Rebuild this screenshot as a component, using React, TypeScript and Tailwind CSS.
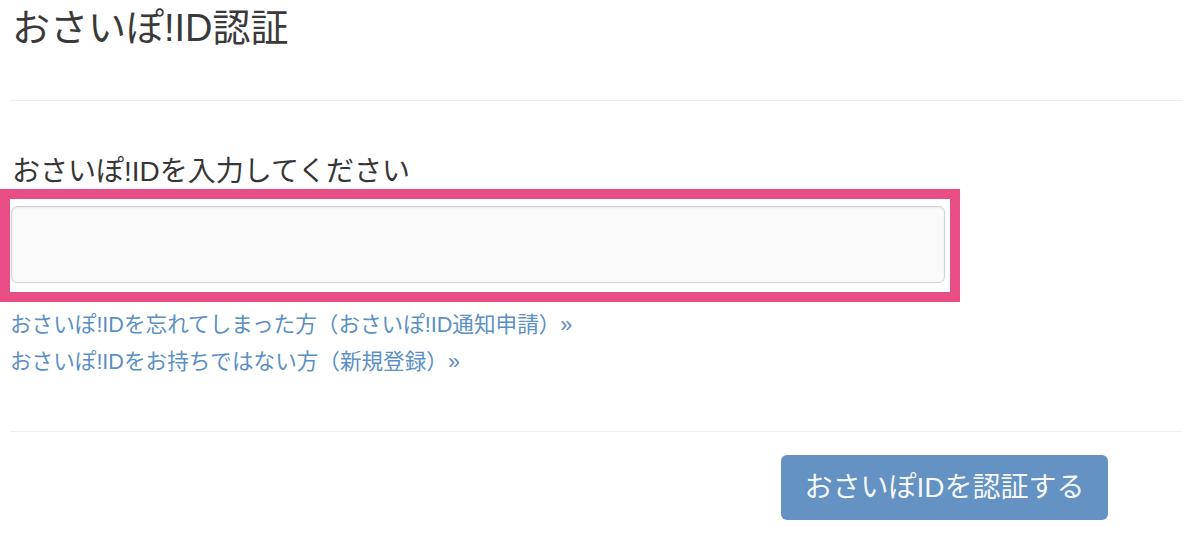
import React from "react";

const font = { fontFamily: '"Liberation Sans", "Noto Sans CJK JP", sans-serif' };

export default function App() {
    return (
        <div className="w-[1182px] h-[542px] bg-white overflow-hidden" style={font}>
            <div className="flex flex-col pl-[10px]">
                {/* page title */}
                <h1 className="mt-[6px] ml-[2px] h-[44px] leading-[44px] text-[38px] text-[#3a3a3a]">おさいぽ!ID認証</h1>
                <div className="mt-[50px] h-px bg-[#eeeeea]"></div>

                {/* id input */}
                <label className="mt-[54px] ml-[2px] h-[34px] leading-[34px] text-[28px] text-[#363636]">おさいぽ!IDを入力してください</label>
                <div className="mt-0 -ml-[10px] w-[960px] border-[10px] border-[#e84d86] bg-white pt-[7px] pb-[9px] pl-[1px] pr-[5px]">
                    <input
                        type="text"
                        className="block w-full h-[77px] rounded-[6px] border border-[#d2d2d2] bg-[#fafafa] shadow-[inset_0_1px_2px_rgba(0,0,0,0.08)] focus:outline-none"
                    />
                </div>

                {/* help links */}
                <div className="mt-[4px] flex flex-col text-[21.6px] text-[#5a90c6]">
                    <a className="h-[37px] leading-[37px]" href="#">おさいぽ!IDを忘れてしまった方（おさいぽ!ID通知申請）»</a>
                    <a className="h-[37px] leading-[37px]" href="#">おさいぽ!IDをお持ちではない方（新規登録）»</a>
                </div>

                <div className="mt-[51px] h-px bg-[#eeeeea]"></div>

                {/* submit */}
                <div className="mt-[23px] flex justify-end pr-[74px]">
                    <button
                        type="button"
                        className="w-[327px] h-[65px] rounded-[6px] bg-[#6492c2] text-[28px] leading-none text-white/95"
                    >
                        おさいぽIDを認証する
                    </button>
                </div>
            </div>
        </div>
    );
}
